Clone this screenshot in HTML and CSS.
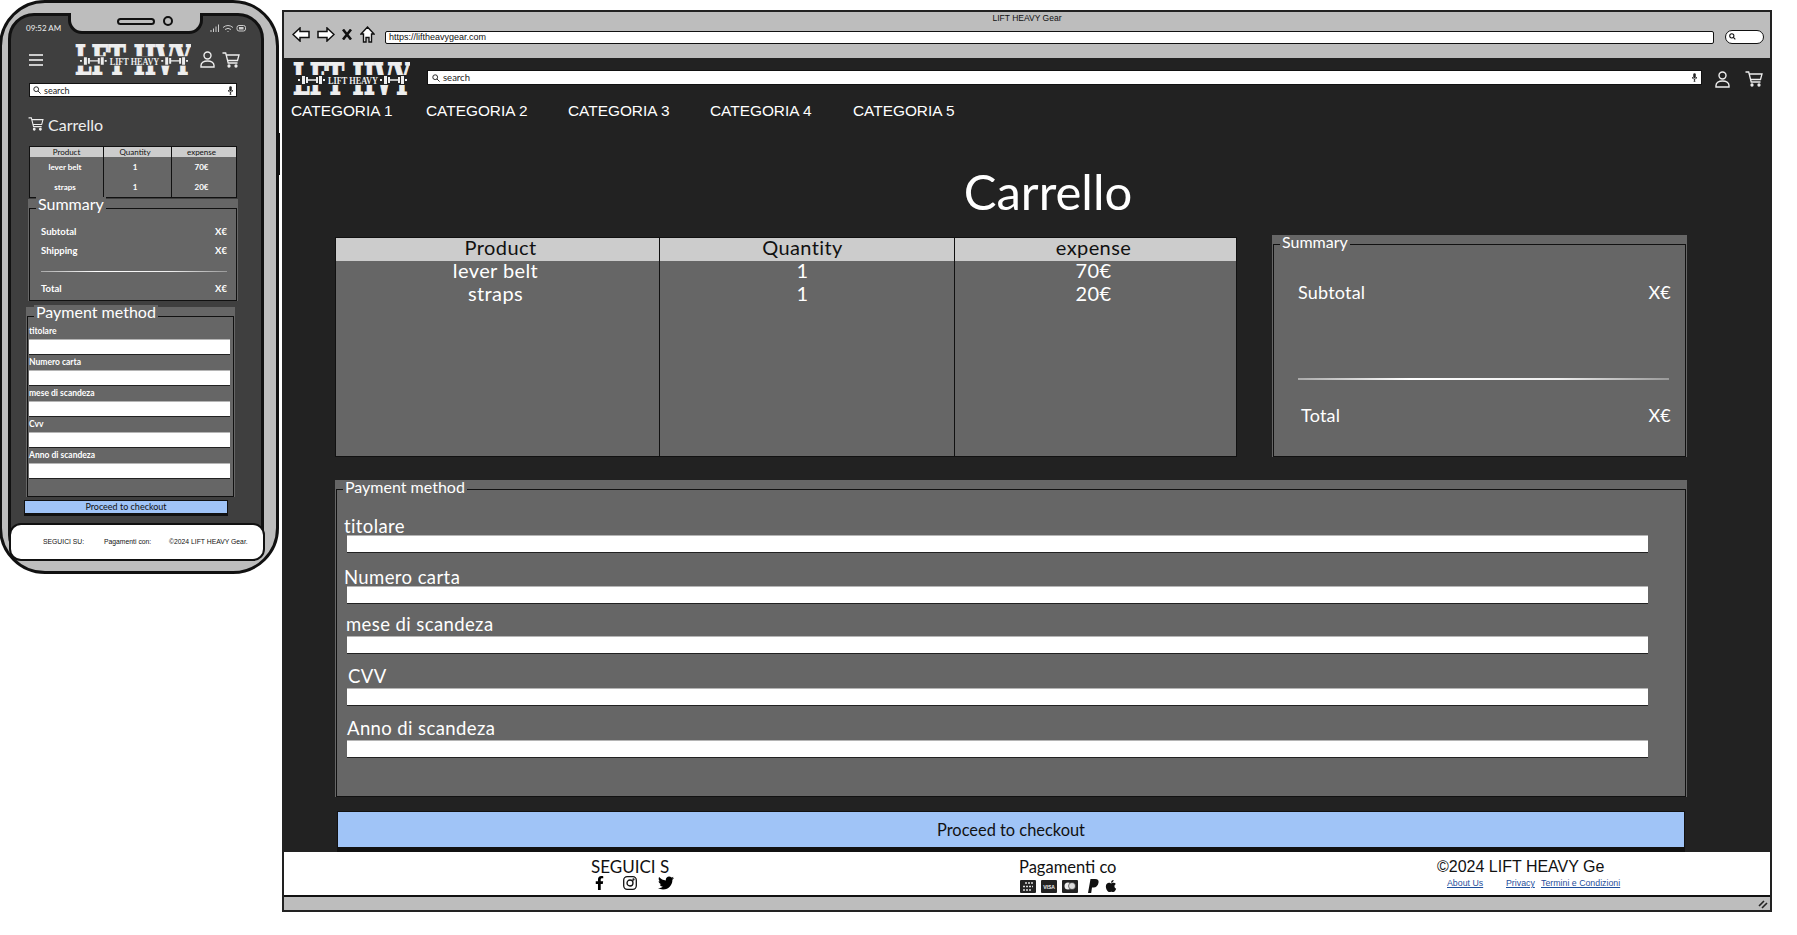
FILE: index.html
```html
<!DOCTYPE html>
<html lang="en">
<head>
  <meta charset="UTF-8">
  <title>LIFT HEAVY Gear</title>
  <link rel="stylesheet" href="styles.css">
</head>
<body>
  <div class="phone">
    <div class="phone-btn"></div>
    <div class="screen">
      <div class="notch">
        <div class="speaker"></div>
        <div class="camera"></div>
      </div>
      <div class="m-status">
        <span>09:52 AM</span>
        <svg class="m-status-icons" viewBox="0 0 36 8" fill="none" stroke="#ccc" stroke-width="1">
          <path d="M1 8V6M3.500 8V4.500M6 8V2.500M8.500 8V.5"/>
          <path d="M13 3.500q5-4 10 0M15 5.500q3-2.500 6 0M17.500 7.500l.5-.5.5.5"/>
          <rect x="27" y="1.500" width="8.500" height="5.500" rx="2"/>
          <rect x="29" y="3" width="4.500" height="2.500" fill="#ccc" stroke="none"/>
        </svg>
      </div>
      <div class="m-top">
        <div class="burger"><i></i><i></i><i></i></div>
        <svg class="logo logo-phone" viewBox="0 0 117 33" preserveAspectRatio="none">
          <text class="logo-big" transform="scale(.525 1)" x="0" y="33" textLength="223" lengthAdjust="spacingAndGlyphs">LFT HVY</text>
          <rect class="logo-band" x="0" y="13" width="117" height="10"/>
          <path class="logo-bell" d="M5 17h2v2H5zM9 14h3v8H9zM13 15h2v6h-2zM15 17.300h8v1.400h-8zM23 15h2v6h-2zM26 14h3v8h-3zM30 17h2v2h-2zM87 17h2v2h-2zM91 14h3v8h-3zM95 15h2v6h-2zM97 17.300h8v1.400h-8zM105 15h2v6h-2zM108 14h3v8h-3zM112 17h2v2h-2z"/>
          <text class="logo-small" x="35" y="22" textLength="50" lengthAdjust="spacingAndGlyphs">LIFT HEAVY</text>
        </svg>
        <svg class="ico-user m-user" viewBox="0 0 15 17" fill="none" stroke="#eee" stroke-width="1.400">
          <circle cx="7.500" cy="4.500" r="3.500"/>
          <path d="M1 16v-1.500c0-3 3-4.500 6.500-4.500s6.500 1.500 6.500 4.500V16z"/>
        </svg>
        <svg class="ico-cart m-cart" viewBox="0 0 18 16" fill="none" stroke="#eee" stroke-width="1.300">
          <path d="M.5 1h3.200l2.500 10h9.300"/>
          <path d="M4.200 3H17l-1.500 5.500H5.500"/>
          <circle cx="7" cy="14" r="1" fill="#eee"/>
          <circle cx="14" cy="14" r="1" fill="#eee"/>
        </svg>
      </div>
      <div class="searchbar m-search">
        <svg class="ico-lens" viewBox="0 0 10 10" fill="none" stroke="#222" stroke-width="1.200"><circle cx="4" cy="4" r="3"/><path d="M6.300 6.300L9.500 9.500"/></svg>
        <span>search</span>
        <svg class="ico-mic" viewBox="0 0 6 10" fill="#222"><rect x="1.500" width="3" height="6" rx="1.500"/><path d="M0 4.500h1v.5q0 1.500 2 1.500t2-1.500v-.5h1v.5q0 2-2.500 2.500V9H4v1H2V9h.5V7.500Q0 7 0 5z"/></svg>
      </div>
      <h2 class="m-title">
        <svg class="ico-cart m-title-cart" viewBox="0 0 18 16" fill="none" stroke="#eee" stroke-width="1.200">
          <path d="M.5 1h3.200l2.500 10h9.300"/>
          <path d="M4.200 3H17l-1.500 5.500H5.500"/>
          <circle cx="7" cy="14" r="1" fill="#eee"/>
          <circle cx="14" cy="14" r="1" fill="#eee"/>
        </svg>
        Carrello
      </h2>
      <table class="cart-table m-table">
        <colgroup><col class="m-col1"><col class="m-col2"><col></colgroup>
        <tr><th>Product</th><th>Quantity</th><th>expense</th></tr>
        <tr><td>lever belt</td><td>1</td><td>70€</td></tr>
        <tr><td>straps</td><td>1</td><td>20€</td></tr>
      </table>
      <div class="panel m-panel m-summary">
        <div class="legend m-legend">Summary</div>
        <div class="panel-body m-summary-body">
          <div class="sum-row"><span>Subtotal</span><span>X€</span></div>
          <div class="sum-row m-ship"><span>Shipping</span><span>X€</span></div>
          <div class="sum-line m-line"></div>
          <div class="sum-row m-total"><span>Total</span><span>X€</span></div>
        </div>
      </div>
      <div class="panel m-panel m-payment">
        <div class="legend m-legend">Payment method</div>
        <div class="panel-body m-form">
          <div class="m-field"><label>titolare</label><input class="input" type="text"></div>
          <div class="m-field"><label>Numero carta</label><input class="input" type="text"></div>
          <div class="m-field"><label>mese di scandeza</label><input class="input" type="text"></div>
          <div class="m-field"><label>Cvv</label><input class="input" type="text"></div>
          <div class="m-field"><label>Anno di scandeza</label><input class="input" type="text"></div>
        </div>
      </div>
      <button class="checkout m-checkout">Proceed to checkout</button>
      <div class="m-footer">
        <span>SEGUICI SU:</span>
        <span>Pagamenti con:</span>
        <span>©2024 LIFT HEAVY Gear.</span>
      </div>
    </div>
  </div>

  <div class="browser">
    <div class="chrome">
      <div class="page-title">LIFT HEAVY Gear</div>
      <div class="toolbar">
        <svg class="nav-ico" viewBox="0 0 18 15" fill="#fff" stroke="#111" stroke-width="1.500"><path d="M1 7.500L8 1v3.500h9v6H8V14z"/></svg>
        <svg class="nav-ico fwd" viewBox="0 0 18 15" fill="#fff" stroke="#111" stroke-width="1.500"><path d="M17 7.500L10 1v3.500H1v6h9V14z"/></svg>
        <svg class="nav-ico ico-x" viewBox="0 0 10 11" fill="none" stroke="#111" stroke-width="2.600"><path d="M1 .5l8 10M9 .5l-8 10"/></svg>
        <svg class="nav-ico ico-home" viewBox="0 0 15 17" fill="#fff" stroke="#111" stroke-width="1.400"><path d="M7.500 1L14 8h-2.500v8H9v-4.500H6V16H3.500V8H1z"/></svg>
        <div class="address">https://liftheavygear.com</div>
        <div class="web-search">
          <svg viewBox="0 0 10 10" fill="none" stroke="#111" stroke-width="1.500"><circle cx="4" cy="4" r="3"/><path d="M6.300 6.300L9 9"/></svg>
        </div>
      </div>
    </div>

    <div class="main">
      <div class="top">
        <svg class="logo" viewBox="0 0 117 33">
          <text class="logo-big" transform="scale(.525 1)" x="0" y="33" textLength="223" lengthAdjust="spacingAndGlyphs">LFT HVY</text>
          <rect class="logo-band" x="0" y="13" width="117" height="10"/>
          <path class="logo-bell" d="M5 17h2v2H5zM9 14h3v8H9zM13 15h2v6h-2zM15 17.300h8v1.400h-8zM23 15h2v6h-2zM26 14h3v8h-3zM30 17h2v2h-2zM87 17h2v2h-2zM91 14h3v8h-3zM95 15h2v6h-2zM97 17.300h8v1.400h-8zM105 15h2v6h-2zM108 14h3v8h-3zM112 17h2v2h-2z"/>
          <text class="logo-small" x="35" y="22" textLength="50" lengthAdjust="spacingAndGlyphs">LIFT HEAVY</text>
        </svg>
        <div class="searchbar top-search">
          <svg class="ico-lens" viewBox="0 0 10 10" fill="none" stroke="#222" stroke-width="1.200"><circle cx="4" cy="4" r="3"/><path d="M6.300 6.300L9.500 9.500"/></svg>
          <span>search</span>
          <svg class="ico-mic" viewBox="0 0 6 10" fill="#222"><rect x="1.500" width="3" height="6" rx="1.500"/><path d="M0 4.500h1v.5q0 1.500 2 1.500t2-1.500v-.5h1v.5q0 2-2.500 2.500V9H4v1H2V9h.5V7.500Q0 7 0 5z"/></svg>
        </div>
        <svg class="ico-user" viewBox="0 0 15 17" fill="none" stroke="#eee" stroke-width="1.400">
          <circle cx="7.500" cy="4.500" r="3.500"/>
          <path d="M1 16v-1.500c0-3 3-4.500 6.500-4.500s6.500 1.500 6.500 4.500V16z"/>
        </svg>
        <svg class="ico-cart" viewBox="0 0 18 16" fill="none" stroke="#eee" stroke-width="1.300">
          <path d="M.5 1h3.200l2.500 10h9.300"/>
          <path d="M4.200 3H17l-1.500 5.500H5.500"/>
          <circle cx="7" cy="14" r="1" fill="#eee"/>
          <circle cx="14" cy="14" r="1" fill="#eee"/>
        </svg>
      </div>
      <nav class="cats">
        <a>CATEGORIA 1</a>
        <a>CATEGORIA 2</a>
        <a>CATEGORIA 3</a>
        <a>CATEGORIA 4</a>
        <a>CATEGORIA 5</a>
      </nav>
      <h1 class="title">Carrello</h1>

      <div class="content">
        <div class="cart-row">
          <table class="cart-table desk-table">
            <colgroup><col class="col1"><col class="col2"><col></colgroup>
            <tr><th>Product</th><th>Quantity</th><th>expense</th></tr>
            <tr><td>lever belt</td><td>1</td><td>70€</td></tr>
            <tr><td>straps</td><td>1</td><td>20€</td></tr>
            <tr class="filler"><td></td><td></td><td></td></tr>
          </table>
          <div class="panel summary">
            <div class="legend">Summary</div>
            <div class="panel-body summary-body">
              <div class="sum-row sub"><span>Subtotal</span><span>X€</span></div>
              <div class="sum-line"></div>
              <div class="sum-row total"><span>Total</span><span>X€</span></div>
            </div>
          </div>
        </div>

        <div class="panel payment">
          <div class="legend">Payment method</div>
          <div class="panel-body form">
            <div class="field"><label>titolare</label><input class="input" type="text"></div>
            <div class="field"><label>Numero carta</label><input class="input" type="text"></div>
            <div class="field"><label>mese di scandeza</label><input class="input" type="text"></div>
            <div class="field"><label>CVV</label><input class="input" type="text"></div>
            <div class="field"><label>Anno di scandeza</label><input class="input" type="text"></div>
          </div>
        </div>

        <button class="checkout">Proceed to checkout</button>
      </div>
    </div>

    <footer class="footer">
      <div>
        <div class="foot-head">SEGUICI S</div>
        <div class="socials">
          <svg class="so-f" viewBox="0 0 320 512"><path d="M279.140 288l14.220-92.660h-88.910v-60.130c0-25.350 12.420-50.060 52.240-50.060h40.420V6.260S260.430 0 225.360 0c-73.220 0-121.080 44.380-121.080 124.720v70.620H22.890V288h81.390v224h100.170V288z"/></svg>
          <svg class="so-i" viewBox="0 0 14 14" fill="none" stroke="#111" stroke-width="1.300"><rect x=".7" y=".7" width="12.600" height="12.600" rx="3.500"/><circle cx="7" cy="7" r="3"/><circle cx="10.500" cy="3.500" r=".5"/></svg>
          <svg class="so-t" viewBox="0 0 512 512"><path d="M459.370 151.716c.325 4.548.325 9.097.325 13.645 0 138.720-105.583 298.558-298.558 298.558-59.452 0-114.680-17.219-161.137-47.106 8.447.974 16.568 1.299 25.340 1.299 49.055 0 94.213-16.568 130.274-44.832-46.132-.975-84.792-31.188-98.112-72.772 6.498.974 12.995 1.624 19.818 1.624 9.421 0 18.843-1.300 27.614-3.573-48.081-9.747-84.143-51.980-84.143-102.985v-1.299c13.969 7.797 30.214 12.670 47.431 13.319-28.264-18.843-46.781-51.005-46.781-87.391 0-19.492 5.197-37.360 14.294-52.954 51.655 63.675 129.300 105.258 216.365 109.807-1.624-7.797-2.599-15.918-2.599-24.040 0-57.828 46.782-104.934 104.934-104.934 30.213 0 57.502 12.670 76.670 33.137 23.715-4.548 46.456-13.320 66.599-25.340-7.798 24.366-24.366 44.833-46.132 57.827 21.117-2.273 41.584-8.122 60.426-16.243-14.292 20.791-32.161 39.308-52.628 54.253z"/></svg>
        </div>
      </div>
      <div>
        <div class="foot-head foot-pay">Pagamenti co</div>
        <div class="pays">
          <svg class="pay-card" viewBox="0 0 16 13"><rect width="16" height="13" rx="1" fill="#222"/><path d="M5 3h8M3 6.500h10M3 10h8" stroke="#ddd" stroke-width="1.400" stroke-dasharray="2 1"/></svg>
          <svg class="pay-card" viewBox="0 0 16 13"><rect width="16" height="13" rx="1" fill="#222"/><text class="visa" x="8" y="8.500" text-anchor="middle">VISA</text></svg>
          <svg class="pay-card" viewBox="0 0 16 13"><rect width="16" height="13" rx="1" fill="#222"/><circle cx="6" cy="6" r="3.500" fill="#eee"/><circle cx="10" cy="6" r="3.500" fill="#ddd" stroke="#222" stroke-width=".6"/></svg>
          <svg class="pay-pal" viewBox="0 0 11 14" fill="#111"><path d="M2.500 0H7c3 0 4 1.500 3.500 3.800C10 7 8 8.500 5.500 8.500H4L3.200 14H0z"/></svg>
          <svg class="pay-apple" viewBox="0 0 384 512" fill="#111"><path d="M318.700 268.700c-.2-36.700 16.400-64.400 50-84.800-18.800-26.900-47.200-41.700-84.700-44.600-35.500-2.800-74.300 20.700-88.500 20.700-15 0-49.400-19.700-76.400-19.700C63.300 141.200 4 184.800 4 273.500q0 39.300 14.400 81.200c12.800 36.700 59 126.700 107.200 125.200 25.200-.6 43-17.900 75.800-17.900 31.800 0 48.300 17.900 76.400 17.900 48.600-.7 90.400-82.500 102.600-119.300-65.200-30.700-61.700-90-61.700-91.900zm-56.600-164.200c27.300-32.400 24.800-61.900 24-72.500-24.100 1.400-52 16.400-67.900 34.900-17.500 19.800-27.800 44.300-25.600 71.900 26.100 2 49.900-11.400 69.500-34.300z"/></svg>
        </div>
      </div>
      <div>
        <div class="foot-copy">©2024 LIFT HEAVY Ge</div>
        <div class="foot-links"><a>About Us</a><a>Privacy</a><a>Termini e Condizioni</a></div>
      </div>
    </footer>
    <div class="statusbar">
      <svg viewBox="0 0 10 9" fill="none" stroke="#222" stroke-width="1.600"><path d="M1 6l5-5M4 8l5-5"/></svg>
    </div>
  </div>
</body>
</html>
```

FILE: styles.css
```css
* {
  box-sizing: border-box;
}
html, body {
  height: 935px;
  overflow: hidden;
}
body {
  margin: 0;
  background: #fff;
  color: #111;
  font-family: Lato, "Liberation Sans", sans-serif;
  display: flex;
  align-items: flex-start;
}
svg {
  display: block;
  flex-shrink: 0;
}

/* phone mockup */
.phone {
  position: relative;
  width: 280px;
  height: 574px;
  margin-left: -1px;
  padding: 10px 14px 9px 6px;
  background: #bdbdbd;
  border: 3px solid #111;
  border-radius: 46px;
}
.phone-btn {
  position: absolute;
  right: -4px;
  top: 130px;
  width: 4px;
  height: 42px;
  background: #111;
}
.screen {
  position: relative;
  width: 256px;
  height: 548px;
  background: #3f3f3f;
  border: 3px solid #111;
  border-radius: 26px;
  color: #eee;
}
.notch {
  position: absolute;
  left: 57px;
  top: -3px;
  width: 135px;
  height: 21px;
  background: #bdbdbd;
  border: 3px solid #111;
  border-top: none;
  border-radius: 0 0 14px 14px;
}
.speaker {
  position: absolute;
  left: 46px;
  top: 5px;
  width: 38px;
  height: 7px;
  border: 2px solid #111;
  border-radius: 4px;
}
.camera {
  position: absolute;
  left: 92px;
  top: 3px;
  width: 10px;
  height: 10px;
  border: 2px solid #111;
  border-radius: 50%;
}
.m-status {
  height: 24px;
  padding: 0 15px;
  display: flex;
  align-items: center;
  justify-content: space-between;
  font-size: 8px;
}
.m-status-icons {
  width: 36px;
  height: 8px;
}
.m-top {
  display: flex;
  align-items: center;
  height: 31px;
  margin-top: 4px;
  padding-left: 18px;
}
.burger {
  width: 14px;
  margin-right: 32px;
}
.burger i {
  display: block;
  height: 2px;
  background: #ccc;
  margin-bottom: 3px;
}
.burger i:last-child {
  margin-bottom: 0;
}
.logo {
  width: 117px;
  height: 33px;
  --band: #222;
}
.logo-phone {
  width: 116px;
  height: 31px;
  --band: #3f3f3f;
}
.logo-big {
  font-family: "DejaVu Serif", serif;
  font-weight: bold;
  font-size: 45px;
  fill: #eee;
  stroke: #eee;
  stroke-width: 1.500px;
}
.logo-band {
  fill: var(--band);
}
.logo-bell {
  fill: #eee;
}
.logo-small {
  font-family: "Liberation Serif", serif;
  font-weight: bold;
  font-size: 11px;
  fill: #eee;
}
.ico-user {
  width: 15px;
  height: 17px;
  margin-left: 13px;
}
.ico-cart {
  width: 18px;
  height: 16px;
  margin-left: 15px;
}
.m-user {
  margin-left: 9px;
}
.m-cart {
  margin-left: 7px;
}
.searchbar {
  display: flex;
  align-items: center;
  background: #fff;
  color: #222;
  border: 1.5px solid #111;
  font-size: 9px;
  padding: 0 3px;
}
.searchbar span {
  flex: 1;
  margin-left: 3px;
}
.ico-lens {
  width: 8px;
  height: 8px;
}
.ico-mic {
  width: 5px;
  height: 9px;
}
.m-search {
  width: 208px;
  height: 14px;
  margin: 8px 0 0 18px;
}
.m-title {
  display: flex;
  align-items: center;
  margin: 17px 0 0 17px;
  height: 20px;
  font-size: 16px;
  font-weight: 400;
}
.m-title-cart {
  width: 16px;
  height: 14px;
  margin: 0 4px 0 0;
}

/* cart table */
.cart-table {
  border-collapse: collapse;
  table-layout: fixed;
  background: #666;
  color: #fff;
  text-align: center;
  border: 1.5px solid #111;
}
.cart-table th {
  background: #ccc;
  color: #111;
  font-weight: 400;
  padding: 0;
  border-left: 1.5px solid #111;
}
.cart-table td {
  padding: 0 3px 0 0;
  border-left: 1.5px solid #111;
}
.desk-table {
  width: 902px;
  height: 220px;
  margin-top: 2px;
  font-size: 20px;
  line-height: 19px;
  letter-spacing: .4px;
}
.desk-table tr {
  height: 23px;
}
.desk-table th,
.desk-table td {
  padding-bottom: 4px;
  padding-right: 4px;
}
.desk-table th:first-child {
  padding-left: 6px;
  padding-right: 0;
}
.desk-table th:nth-child(2),
.desk-table td:nth-child(2) {
  padding-right: 9px;
}
.desk-table .filler {
  height: auto;
}
.col1 {
  width: 324px;
}
.col2 {
  width: 295px;
}
.m-table {
  width: 208px;
  height: 50px;
  margin: 12px 0 0 18px;
  font-size: 8px;
  font-weight: 700;
  line-height: 10px;
}
.m-table tr {
  height: 20px;
}
.m-table tr:first-child {
  height: 10px;
}
.m-table th {
  font-weight: 400;
}
.m-table th:nth-child(n+2),
.m-table td:nth-child(n+2) {
  padding-right: 5px;
}
.m-col1 {
  width: 74px;
}
.m-col2 {
  width: 68px;
}

/* panels with a tab legend */
.panel {
  position: relative;
  padding: 9px 1px 0;
  background: #666;
  color: #fff;
}
.panel-body {
  border: 1.5px solid #111;
  background: #666;
}
.legend {
  position: absolute;
  left: 8px;
  top: 0;
  padding: 0 2px;
  background: #666;
  font-size: 16px;
  line-height: 14px;
}
.m-legend {
  left: 8px;
  top: -2px;
}
.cart-row {
  display: flex;
  align-items: flex-start;
  gap: 35px;
}
.summary {
  width: 415px;
}
.summary-body {
  height: 213px;
  padding: 37px 14px 0 24px;
  font-size: 18px;
  line-height: 20px;
  letter-spacing: .2px;
}
.sum-row {
  display: flex;
  justify-content: space-between;
}
.sum-line {
  height: 2px;
  margin: 76px 2px 0 0;
  background: linear-gradient(90deg, #aaa, #fff 30%, #eee 70%, #999);
}
.sum-row.total {
  margin-top: 25px;
  padding-left: 3px;
}
.m-panel {
  width: 210px;
}
.m-summary {
  margin: 1px 0 0 17px;
}
.m-summary-body {
  height: 93px;
  padding: 17px 9px 0 11px;
  font-size: 9.500px;
  font-weight: 700;
  line-height: 12px;
  letter-spacing: 0;
}
.m-ship {
  margin-top: 7px;
}
.m-line {
  height: 1px;
  margin: 14px 0 0;
}
.m-total {
  margin-top: 11px;
}
.m-payment {
  width: 209px;
  margin: 6px 0 0 15px;
}
.m-form {
  height: 181px;
  padding: 9px 3px 0 1px;
}
.m-field {
  margin-bottom: 2px;
}
.m-field label {
  display: block;
  height: 10px;
  margin-bottom: 3px;
  font-size: 8.500px;
  line-height: 10px;
  font-weight: 700;
}
.m-field .input {
  height: 16px;
}
.input {
  display: block;
  width: 100%;
  background: #fff;
  border: none;
  border-top: 1px solid #b5b5b5;
  border-bottom: 1.500px solid #222;
  border-radius: 0;
  padding: 0;
}
.checkout {
  display: block;
  width: 1348px;
  height: 41px;
  margin: 14px 0 0 2px;
  padding: 0;
  background: #a0c4f7;
  color: #111;
  border: 1.500px solid #111;
  border-bottom-width: 5px;
  border-radius: 0;
  font-family: Lato, sans-serif;
  font-size: 16.400px;
}
.m-checkout {
  width: 204px;
  height: 16px;
  margin: 3px 0 0 13px;
  border-width: 1px 1.500px 3px;
  font-size: 9px;
  line-height: 10px;
}
.m-footer {
  display: grid;
  grid-template-columns: 61px 65px auto;
  align-items: center;
  width: 256px;
  height: 38px;
  margin: 7px 0 0 -2px;
  padding-left: 32px;
  background: #fff;
  color: #111;
  border: 2px solid #111;
  border-radius: 12px;
  font-family: "Liberation Sans", sans-serif;
  font-size: 6.800px;
  white-space: nowrap;
}

/* desktop browser mockup */
.browser {
  display: flex;
  flex-direction: column;
  width: 1490px;
  height: 902px;
  margin: 10px 0 0 3px;
  border: 2px solid #222;
}
.chrome {
  height: 46px;
  flex-shrink: 0;
  background: #bdbdbd;
  font-family: "Liberation Sans", sans-serif;
}
.page-title {
  height: 12px;
  font-size: 8.500px;
  line-height: 12px;
  text-align: center;
}
.toolbar {
  display: flex;
  align-items: center;
  height: 14px;
  margin-top: 6px;
  padding-left: 8px;
}
.nav-ico {
  width: 18px;
  height: 15px;
  margin-bottom: 6px;
}
.fwd {
  margin-left: 7px;
}
.ico-x {
  width: 10px;
  height: 11px;
  margin-left: 7px;
}
.ico-home {
  width: 15px;
  height: 17px;
  margin-left: 8px;
}
.address {
  width: 1329px;
  height: 13px;
  margin-left: 10px;
  padding-left: 3px;
  background: #fff;
  border: 1.500px solid #111;
  border-radius: 2px;
  font-size: 9px;
  line-height: 10px;
}
.web-search {
  width: 39px;
  height: 14px;
  margin-left: 11px;
  padding: 2px 3px;
  background: #fff;
  border: 1.500px solid #111;
  border-radius: 8px;
}
.web-search svg {
  width: 7px;
  height: 7px;
}
.main {
  flex: 1;
  min-height: 0;
  background: #222;
  color: #fff;
}
.top {
  display: flex;
  align-items: flex-start;
  height: 33px;
  margin-top: 4px;
  padding: 0 7px 0 9px;
}
.top-search {
  flex: 1;
  height: 15px;
  margin: 8px 0 0 17px;
  padding: 0 4px;
  font-size: 9.500px;
}
.top .ico-user,
.top .ico-cart {
  margin-top: 9px;
}
.cats {
  display: grid;
  grid-template-columns: 135px 142px 142px 143px auto;
  margin-top: 7px;
  padding-left: 7px;
  font-family: "Liberation Sans", sans-serif;
  font-size: 15.400px;
  line-height: 18px;
}
.title {
  margin: 43px 0 0 0;
  padding-left: 42px;
  height: 56px;
  font-size: 49px;
  font-weight: 400;
  line-height: 56px;
  text-align: center;
}
.content {
  margin-top: 16px;
  padding: 0 83px 0 51px;
}
.payment {
  margin-top: 23px;
}
.form {
  height: 308px;
  padding: 27px 0 0 10px;
}
.field label {
  display: block;
  height: 18px;
  margin: 0 0 3px -3px;
  font-size: 18.500px;
  line-height: 18px;
  letter-spacing: .4px;
}
.field .input {
  width: 1301px;
  height: 18px;
}
.field + .field {
  margin-top: 13px;
}
.field:nth-child(1) label,
.field:nth-child(2) label {
  margin-bottom: 0;
}
.field:nth-child(2) {
  margin-top: 15px;
}
.field:nth-child(3) {
  margin-top: 11px;
}
.field:nth-child(3) label {
  margin-left: -1px;
}
.field:nth-child(4) label {
  margin-left: 1px;
}
.field:nth-child(5) label {
  margin-left: 0;
}

.footer {
  display: grid;
  grid-template-columns: 428px 418px auto;
  height: 45px;
  flex-shrink: 0;
  padding: 6px 0 0 307px;
  background: #fff;
  border-bottom: 2px solid #111;
}
.foot-head,
.foot-copy {
  font-size: 17px;
  line-height: 18px;
  white-space: nowrap;
}
.foot-pay {
  font-size: 16.500px;
}
.foot-copy {
  font-family: "Liberation Sans", sans-serif;
  font-size: 16px;
}
.socials {
  display: flex;
  align-items: center;
  margin-top: -1px;
  height: 15px;
}
.so-f {
  width: 9px;
  height: 14px;
  margin-left: 4px;
}
.so-i {
  width: 14px;
  height: 14px;
  margin-left: 19px;
}
.so-t {
  width: 16px;
  height: 16px;
  margin-left: 21px;
}
.pays {
  display: flex;
  align-items: center;
  margin: 3px 0 0 1px;
  height: 14px;
}
.pay-card {
  width: 16px;
  height: 13px;
  margin-right: 5px;
}
.visa {
  font-family: "Liberation Sans", sans-serif;
  font-weight: bold;
  font-size: 5px;
  fill: #eee;
}
.pay-pal {
  width: 11px;
  height: 14px;
  margin: 0 6px 0 5px;
}
.pay-apple {
  width: 12px;
  height: 14px;
}
.foot-links {
  display: grid;
  grid-template-columns: 59px 35px auto;
  margin: 2px 0 0 10px;
  font-family: "Liberation Sans", sans-serif;
  font-size: 8.800px;
  line-height: 11px;
  color: #1f4f9c;
}
.foot-links a {
  text-decoration: underline;
  white-space: nowrap;
}
.statusbar {
  height: 13px;
  flex-shrink: 0;
  display: flex;
  justify-content: flex-end;
  padding: 3px 2px 0 0;
  background: #bdbdbd;
}
.statusbar svg {
  width: 10px;
  height: 9px;
}
```
